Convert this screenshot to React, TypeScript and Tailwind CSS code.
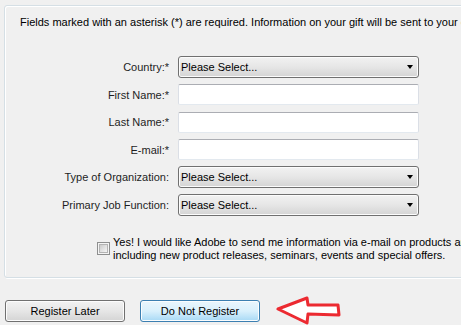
import { ReactNode } from "react";

const font = { fontFamily: '"Liberation Sans", Arial, sans-serif' };

function Select() {
  return (
    <div className="relative h-[22px] w-[241px] rounded-[3px] border border-[#707070] bg-gradient-to-b from-[#f2f2f2] via-[#e6e6e6] to-[#d4d4d4] shadow-[inset_0_0_0_1px_#fcfcfc]">
      <span className="absolute left-[2px] top-[3px] text-[11px] leading-[14px] text-black">Please Select...</span>
      <span className="absolute right-[5px] top-[8px] h-0 w-0 border-x-[3.5px] border-t-[4px] border-x-transparent border-t-black" />
    </div>
  );
}

function TextBox() {
  return (
    <div className="h-[21px] w-[241px] rounded-[2px] border border-[#dbdfe6] border-t-[#abadb3] border-b-[#e3e9ef] bg-white" />
  );
}

function Row({ label, children }: { label: string; children: ReactNode }) {
  return (
    <div className="flex h-[22px] items-center">
      <div className="w-[150px] pr-[1px] text-right text-[11px] leading-[14px] text-[#1e1e1e]">{label}</div>
      <div className="ml-[8px]">{children}</div>
    </div>
  );
}

export default function App() {
  return (
    <div className="h-[325px] w-[461px] overflow-hidden bg-[#f0f0f0] pl-[4px] pt-[5px]" style={font}>
      {/* form panel */}
      <div className="h-[273px] w-[520px] rounded-[3px] border border-[#d5dfe5] pl-[15px] pt-[10px] shadow-[inset_1px_1px_0_#ffffff,1px_1px_0_#ffffff]">
        <p className="whitespace-nowrap text-[11px] leading-[13px] text-black">
          Fields marked with an asterisk (*) are required. Information on your gift will be sent to your email.
        </p>

        <div className="mt-[27px] flex flex-col gap-[5.6px]">
          <Row label="Country:*"><Select /></Row>
          <Row label="First Name:*"><TextBox /></Row>
          <Row label="Last Name:*"><TextBox /></Row>
          <Row label="E-mail:*"><TextBox /></Row>
          <Row label="Type of Organization:"><Select /></Row>
          <Row label="Primary Job Function:"><Select /></Row>
        </div>

        <div className="ml-[77px] mt-[20px] flex items-center gap-[3px]">
          <div className="flex h-[13px] w-[13px] items-center justify-center border border-[#8e8f8f] bg-[#f4f4f4]">
            <div className="h-[9px] w-[9px] border border-[#b4b4b4] bg-gradient-to-br from-[#cbcbcb] to-[#f6f6f6]" />
          </div>
          <p className="whitespace-nowrap text-[11px] leading-[13px] text-black">
            Yes! I would like Adobe to send me information via e-mail on products and services,
            <br />
            including new product releases, seminars, events and special offers.
          </p>
        </div>
      </div>

      {/* buttons */}
      <div className="mt-[18px] flex items-center">
        <button className="ml-[1px] h-[22px] w-[120px] rounded-[3px] border border-[#707070] bg-gradient-to-b from-[#f2f2f2] via-[#e6e6e6] to-[#d4d4d4] text-[11px] text-black shadow-[inset_0_0_0_1px_#fcfcfc]">
          Register Later
        </button>
        <button className="ml-[15px] h-[22px] w-[120px] rounded-[3px] border border-[#3c7fb1] bg-gradient-to-b from-[#eaf6fd] via-[#d9f0fc] to-[#a7d9f5] text-[11px] text-black shadow-[inset_0_0_0_1px_#fbfdfe]">
          Do Not Register
        </button>
        <svg className="ml-[16px]" width="66" height="30" viewBox="0 0 66 30">
          <path
            d="M2 13 L31 2 L32 9 L62 9 L63 19 L32 18 L31 27 Z"
            fill="#ffffff"
            stroke="#ec2a31"
            strokeWidth="3"
            strokeLinejoin="round"
          />
        </svg>
      </div>
    </div>
  );
}
